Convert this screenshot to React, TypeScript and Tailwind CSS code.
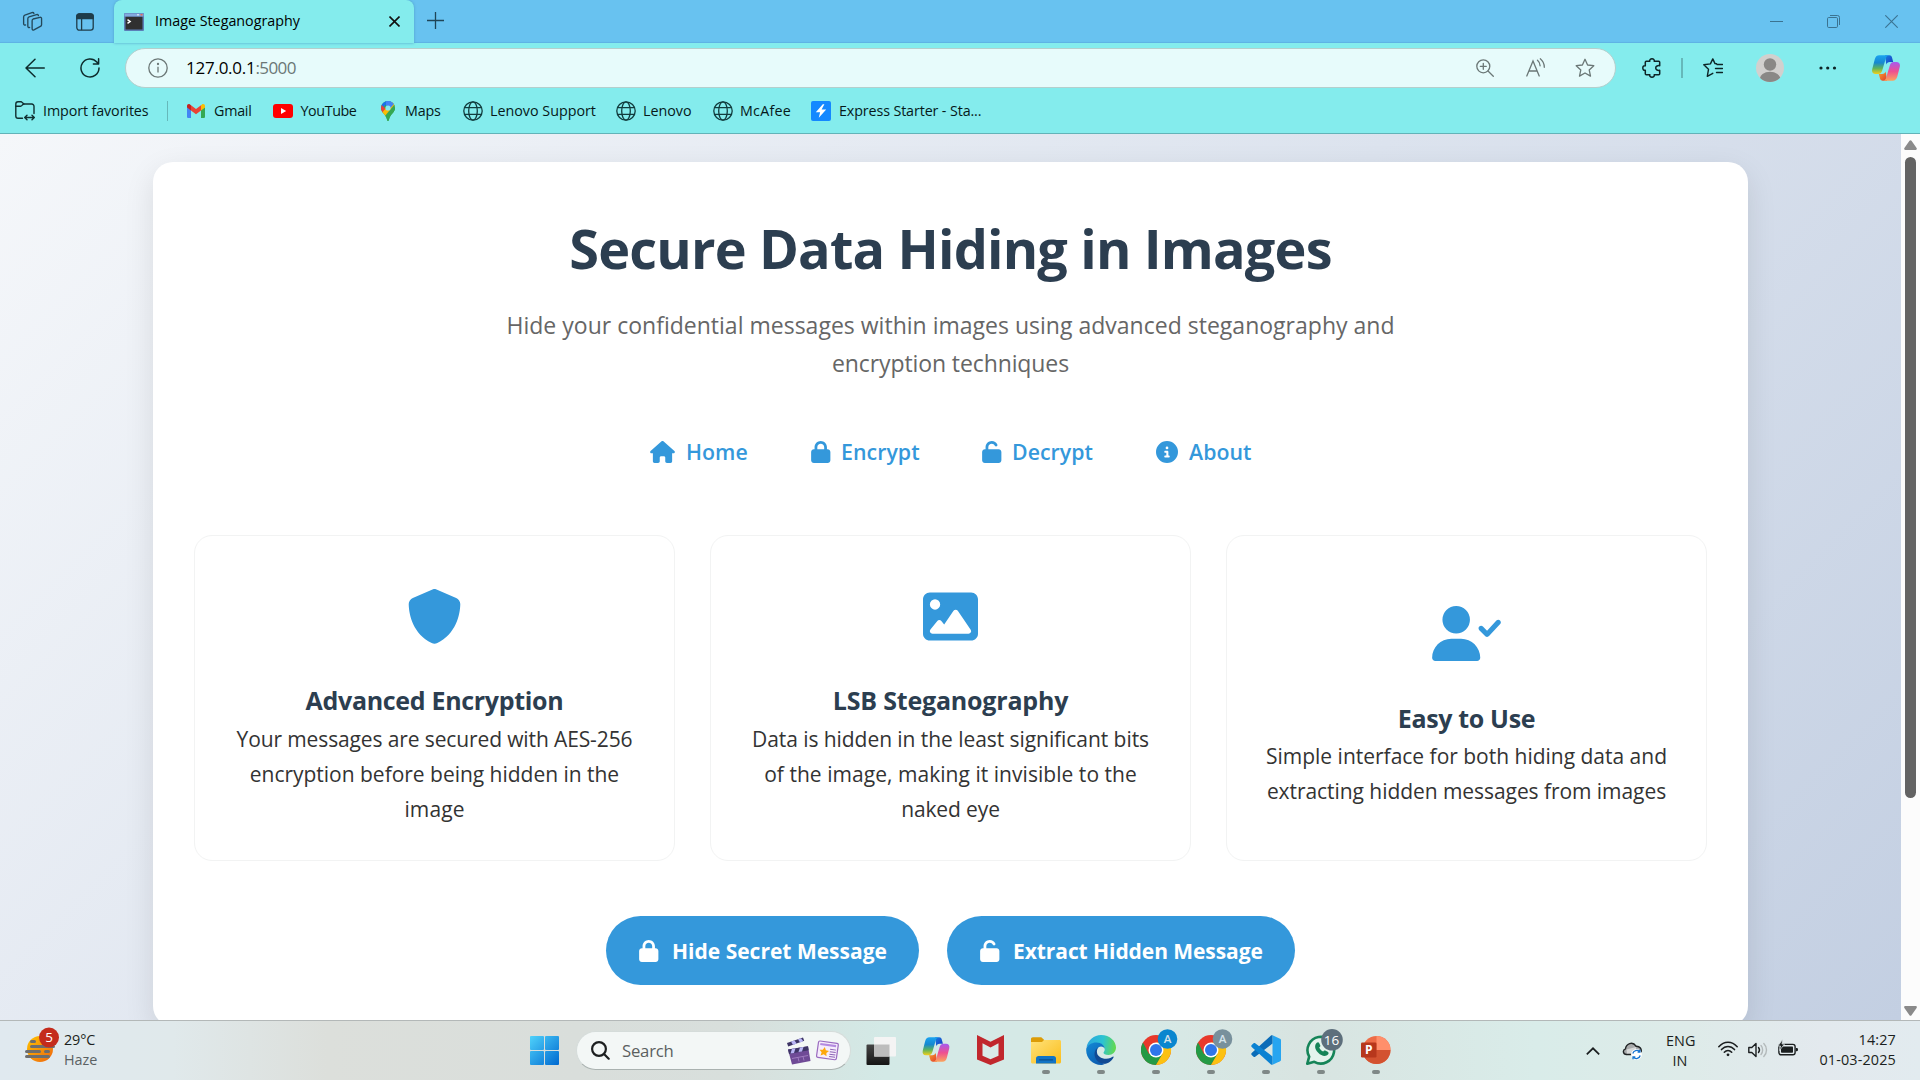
import React from "react";
import { FaCircleInfo, FaHouse, FaImage, FaLock, FaShield, FaUnlock } from "react-icons/fa6";

type P = { className?: string };

const UserCheck = ({ className }: P) => (
  <svg className={className} viewBox="0 0 640 512" fill="currentColor">
    <path d="M96 128a128 128 0 1 1 256 0A128 128 0 1 1 96 128zM0 482.300C0 383.800 79.800 304 178.300 304h91.400C368.200 304 448 383.800 448 482.300c0 16.400-13.300 29.700-29.700 29.700H29.700C13.300 512 0 498.700 0 482.300z" />
    <path d="M632.300 134.400c-9.700-9-24.900-8.450-33.900 1.270l-87.050 93.750-38.390-38.390c-9.380-9.380-24.560-9.380-33.940 0s-9.380 24.560 0 33.940l56 56C499.500 285.500 505.600 288 512 288h.44c6.530-.13 12.720-2.890 17.160-7.670l104-112c9-9.730 8.400-24.930-1.300-33.930z" />
  </svg>
);

const Workspaces = ({ className }: P) => (
  <svg className={className} viewBox="0 0 22 22" fill="none" stroke="#24485a" strokeWidth="1.4" strokeLinejoin="round" strokeLinecap="round">
    <path d="M11.6 8.4 18.8 6.6c1-.2 1.7.4 1.7 1.3v6.6c0 .8-.4 1.4-1.2 1.7l-6.8 3.6c-1 .5-1.9 0-1.9-1.1v-8.6c0-.8.3-1.5 1-1.7Z" />
    <path d="M8 17.2c-1 .4-1.900-.1-1.900-1.200V8.200c0-1 .5-1.700 1.300-2l7.800-2.400c1-.3 1.800.1 2 1" />
    <path d="M3.800 14.600c-1.100.4-2.100-.1-2.100-1.200V6.200c0-1 .5-1.700 1.300-2l7.400-2.500c1-.3 1.800 0 2.100.9" />
  </svg>
);

const TabActions = ({ className }: P) => (
  <svg className={className} viewBox="0 0 18 18" fill="none" stroke="#1f3c4a" strokeWidth="1.3">
    <rect x=".8" y=".8" width="16.400" height="16.400" rx="2.600" />
    <path d="M.8 5.500V3.400A2.600 2.600 0 0 1 3.400.8h11.200a2.600 2.600 0 0 1 2.600 2.600v2.100Z" fill="#1f3c4a" />
    <path d="M5.600 5.500v11.600" />
  </svg>
);

const Terminal = ({ className }: P) => (
  <svg className={className} viewBox="0 0 20 18">
    <rect width="20" height="18" rx="1" fill="#5b7fb8" />
    <rect x=".5" y=".5" width="19" height="3" fill="#83a9dd" />
    <rect x="13" y="1" width="2" height="1.500" fill="#cfdcf0" />
    <rect x="16.500" y="1" width="2" height="1.500" fill="#e26a5a" />
    <rect x="1.500" y="3.800" width="17" height="12.700" fill="#303030" />
    <path d="m3.500 6.600 2.600 1.900-2.600 1.900" fill="none" stroke="#fff" strokeWidth="1.500" />
  </svg>
);

const Globe = ({ className }: P) => (
  <svg className={className} viewBox="0 0 20 20" fill="none" stroke="#123c3e" strokeWidth="1.300">
    <circle cx="10" cy="10" r="9.200" />
    <ellipse cx="10" cy="10" rx="4.300" ry="9.200" />
    <path d="M1.700 6.700h16.600M1.700 13.300h16.600" />
  </svg>
);

const ImportFav = ({ className }: P) => (
  <svg className={className} viewBox="0 0 20 20" fill="none" stroke="#102f31" strokeWidth="1.400" strokeLinecap="round" strokeLinejoin="round">
    <path d="M7.500 17.300H3A2.200 2.200 0 0 1 .8 15.100V3A2.200 2.200 0 0 1 3 .8h3.300L9 3h7.800A2.200 2.200 0 0 1 19 5.200v7.300" />
    <path d="M.8 5.300h4.700C7 5.300 7.500 3 9 3" />
    <path d="M9.800 16.500h9.400M12 14.200l-2.300 2.300 2.300 2.300M17 14.200l2.300 2.300-2.300 2.300" />
  </svg>
);

const Gmail = ({ className }: P) => (
  <svg className={className} viewBox="0 0 18 14">
    <path d="M0 3v9.700C0 13.400.6 14 1.300 14H4V6Z" fill="#4285f4" />
    <path d="M18 3v9.700c0 .7-.6 1.300-1.300 1.300H14V6Z" fill="#34a853" />
    <path d="M14 1.200V6.500l4-3V1.900C18 .2 16.200-.5 15 .4Z" fill="#fbbc04" />
    <path d="M4 6.500V1.200l5 3.800 5-3.800v5.300l-5 3.800Z" fill="#ea4335" />
    <path d="M0 1.900v1.600l4 3V1.200L3 .4C1.800-.5 0 .2 0 1.900Z" fill="#c5221f" />
  </svg>
);

const YouTube = ({ className }: P) => (
  <svg className={className} viewBox="0 0 20 14">
    <rect width="20" height="14" rx="3" fill="#f00" />
    <path d="m8 4 5.200 3L8 10Z" fill="#fff" />
  </svg>
);

const MapsPin = ({ className }: P) => (
  <svg className={className} viewBox="0 0 14 20">
    <clipPath id="pin"><path d="M7 0a7 7 0 0 1 7 7c0 4-3.500 5.500-5.200 9.200C8 18 7.900 20 7 20s-1-2-1.800-3.800C3.500 12.500 0 11 0 7a7 7 0 0 1 7-7Z" /></clipPath>
    <g clipPath="url(#pin)">
      <rect width="14" height="20" fill="#34a853" />
      <path d="M0 14V9L10-2h-10Z" fill="#1a73e8" />
      <path d="M0 3.500 5 8 2 12-2 10Z" fill="#ea4335" />
      <path d="M5-1h6l3 3.500L8 8 5 5Z" fill="#4285f4" />
      <path d="M1 11.500 12 0l2 6-10 10Z" fill="#fbbc04" />
      <path d="M3.500 15.500 14 3v17H4Z" fill="#34a853" />
      <path d="M4.500-1h7l1.400 4L8.500 8Z" fill="#4285f4" />
    </g>
    <circle cx="7" cy="7" r="2.600" fill="#84eced" />
  </svg>
);

const Bolt = ({ className }: P) => (
  <svg className={className} viewBox="0 0 20 20">
    <rect width="20" height="20" rx="2" fill="#1488ff" />
    <path d="M11.800 3.300 4.800 11.300h4.300L7.800 16.800l7.400-8.300h-4.600l2.800-5.200Z" fill="#fff" />
  </svg>
);

const Copilot = ({ className }: P) => (
  <svg className={className} viewBox="0 0 28 26">
    <defs>
      <linearGradient id="cpA" x1="0" y1="0" x2="0" y2="1"><stop offset="0" stopColor="#1aa3f0" /><stop offset=".4" stopColor="#1688d0" /><stop offset=".7" stopColor="#5fb45b" /><stop offset="1" stopColor="#f5cf1b" /></linearGradient>
      <linearGradient id="cpB" x1="0" y1="0" x2="0" y2="1"><stop offset="0" stopColor="#a55bf0" /><stop offset=".5" stopColor="#ee4f91" /><stop offset="1" stopColor="#fba45c" /></linearGradient>
      <linearGradient id="cpC" x1="0" y1="0" x2="1" y2="1"><stop offset="0" stopColor="#1780e0" /><stop offset="1" stopColor="#1937c4" /></linearGradient>
      <linearGradient id="cpD" x1="0" y1="0" x2="1" y2="1"><stop offset="0" stopColor="#f7a52a" /><stop offset="1" stopColor="#e2382f" /></linearGradient>
    </defs>
    <path d="M13 .3h4.300c1.500 0 2.300.8 2.700 2.200L21.200 7h-3.400c-2 0-3 1-3.500 2.500Z" fill="url(#cpC)" />
    <path d="M15 25.700h-4.300c-1.500 0-2.300-.8-2.700-2.200L6.800 19h3.400c2 0 3-1 3.500-2.500Z" fill="url(#cpD)" />
    <path d="M7.300.3h9.200c-1.600.4-2.300 1.700-2.800 3.400l-3.400 11.600c-.7 2.300-1.800 3.700-4 3.700H3.600C.8 19-.4 17 .2 14.200L2.700 4.500C3.400 1.800 4.800.3 7.300.3Z" fill="url(#cpA)" />
    <path d="M20.700 25.700h-9.200c1.600-.4 2.300-1.700 2.800-3.400l3.400-11.600c.7-2.300 1.800-3.700 4-3.700h2.700c2.800 0 4 2 3.400 4.800l-2.500 9.700c-.7 2.700-2.100 4.200-4.600 4.200Z" fill="url(#cpB)" />
  </svg>
);

const starPath = "M10 1.300 12.600 7l6.200.7-4.600 4.200 1.300 6.200L10 15l-5.500 3.100 1.300-6.200L1.200 7.700 7.400 7Z";

const favourites = [
  { label: "Gmail", w: "w-[86px]", icon: <Gmail className="h-3.5 w-[18px]" />, text: "tracking-[-0.25px] ml-[9px]" },
  { label: "YouTube", w: "w-[106px]", icon: <YouTube className="h-3.5 w-5" />, text: "tracking-[-0.4px] ml-[7.5px]" },
  { label: "Maps", w: "w-[84px]", icon: <MapsPin className="ml-0.5 h-5 w-3.5" />, text: "tracking-[-0.2px] ml-[10px]" },
  { label: "Lenovo Support", w: "w-[153px]", icon: <Globe className="size-5" />, text: "ml-[7px]" },
  { label: "Lenovo", w: "w-[97px]", icon: <Globe className="size-5" />, text: "ml-[7px]" },
  { label: "McAfee", w: "w-[98px]", icon: <Globe className="size-5" />, text: "tracking-[0.22px] ml-[7px]" },
  { label: "Express Starter - Sta...", w: "w-[180px]", icon: <Bolt className="size-5" />, text: "tracking-[-0.12px] ml-[8px]" },
];

function TabStrip() {
  return (
    <div className="flex h-[43px] bg-[#68c2f0] shadow-[inset_0_-2px_1px_-1px_#5fb2e4]">
      <div className="flex w-[114px] items-center pl-[22px]">
        <Workspaces className="size-[21px]" />
        <TabActions className="ml-[33px] size-[18px]" />
      </div>
      <div className="flex w-[300px] items-center rounded-t-lg bg-[#84eced] pl-[10px] shadow-[0_0_3px_#4f9fc8]">
        <Terminal className="h-[18px] w-5" />
        <span className="ml-[11px] w-[234px] pb-0.5 text-[14.3px]">Image Steganography</span>
        <svg className="size-[11px]" viewBox="0 0 11 11" stroke="#111" strokeWidth="1.600"><path d="m.5.5 10 10m0-10-10 10" /></svg>
      </div>
      <svg className="mt-3 ml-[13px] size-[17px]" viewBox="0 0 17 17" stroke="#1f4557" strokeWidth="1.300"><path d="M8.500 0v17M0 8.500h17" /></svg>
      <div className="ml-auto flex h-[43px] items-center gap-[44px] pr-[22px] text-[#3b7391]">
        <svg className="size-[13px]" viewBox="0 0 13 13" stroke="currentColor"><path d="M0 6.500h13" /></svg>
        <svg className="mr-px size-[13px]" viewBox="0 0 13 13" fill="none" stroke="currentColor"><rect x=".5" y="2.500" width="10" height="10" rx="1.200" /><path d="M3 .5h7.500a2 2 0 0 1 2 2V10" /></svg>
        <svg className="size-[13px]" viewBox="0 0 13 13" stroke="currentColor" strokeWidth="1.100"><path d="m.3.300 12.400 12.400m0-12.400L.3 12.700" /></svg>
      </div>
    </div>
  );
}

function AddressBar() {
  return (
    <div className="flex h-[50px] items-center pl-[25px]">
      <svg className="size-5" viewBox="0 0 20 20" fill="none" stroke="#0d2b2c" strokeWidth="1.500" strokeLinecap="round" strokeLinejoin="round"><path d="M19.300 10H1M10 1.200 1 10l9 8.800" /></svg>
      <svg className="ml-[35px] size-5" viewBox="0 0 20 20" fill="none" stroke="#0d2b2c" strokeWidth="1.500" strokeLinecap="round" strokeLinejoin="round"><path d="M19 10a9 9 0 1 1-2.200-5.900L18.500 6M18.600.8V6h-5.200" /></svg>
      <div className="ml-[25px] flex h-10 w-[1491px] items-center rounded-full border border-[#b4cfcd] bg-[#e7fbfb] pl-[22px] pr-5 text-[#6b7776]">
        <svg className="size-5" viewBox="0 0 20 20" fill="none" stroke="currentColor" strokeWidth="1.300"><circle cx="10" cy="10" r="9.200" /><path d="M10 8.800v5.600" /><circle cx="10" cy="6" r=".5" fill="currentColor" /></svg>
        <span className="ml-[18px] text-[17px] tracking-[-0.25px] text-black">127.0.0.1</span>
        <span className="text-[17px] tracking-[-0.6px]">:5000</span>
        <svg className="ml-auto size-[18px]" viewBox="0 0 18 18" fill="none" stroke="currentColor" strokeWidth="1.300" strokeLinecap="round"><circle cx="7.300" cy="7.300" r="6.500" /><path d="m12 12 5.300 5.300M7.300 4.300v6M4.300 7.300h6" /></svg>
        <svg className="ml-8 h-5 w-[20px]" viewBox="0 0 20 20" fill="none" stroke="currentColor" strokeWidth="1.300" strokeLinecap="round"><path d="M.8 18 7 3l6.200 15M3 13h8M11.500 2.200c1.600 1.300 2.600 3.300 2.600 5.600M14.300.8c2.400 2 4 5 4 8.500" /></svg>
        <svg className="ml-[29px] size-5" viewBox="0 0 20 20" fill="none" stroke="currentColor" strokeWidth="1.300" strokeLinejoin="round"><path d={starPath} /></svg>
      </div>
      <svg className="ml-[26px] size-5" viewBox="0 0 20 20" fill="none" stroke="#0d2426" strokeWidth="1.500" strokeLinejoin="round"><path d="M4.300 3.300h3.500C7.300 1.800 8.500.8 10 .8s2.700 1 2.200 2.500h4.500c.6 0 1 .4 1 1v3.400c-1.800-.4-4 .3-4 2.300s2.200 2.700 4 2.300v3.400c0 .6-.4 1-1 1h-4.500c.5 1.500-.7 2.500-2.200 2.500s-2.700-1-2.200-2.500H4.300c-.6 0-1-.4-1-1v-3.500C1.800 12.700.8 11.500.8 10s1-2.700 2.500-2.200V4.300c0-.6.4-1 1-1Z" /></svg>
      <div className="ml-[19px] h-5 w-0.5 bg-[#66b8ba]" />
      <svg className="ml-5 size-5" viewBox="0 0 20 20" fill="none" stroke="#0d2426" strokeWidth="1.400" strokeLinecap="round" strokeLinejoin="round"><path d="M13.500 5.800 12 5.600 9.800.9 7.400 5.900.8 6.800l4.700 4.500-1.200 7L9.800 15.300M14 6.500h5.500M12.500 10.500h7M13.500 14.500h6" /></svg>
      <svg className="ml-[33px] size-7" viewBox="0 0 28 28"><clipPath id="av"><circle cx="14" cy="14" r="14" /></clipPath><g clipPath="url(#av)"><rect width="28" height="28" fill="#d2d0ce" /><circle cx="14" cy="10.500" r="6.200" fill="#8a8886" /><ellipse cx="14" cy="25.500" rx="10.500" ry="7.700" fill="#8a8886" /></g></svg>
      <svg className="ml-[35px] h-1 w-[18px]" viewBox="0 0 18 4" fill="#0d2426"><circle cx="2" cy="2" r="1.600" /><circle cx="8.700" cy="2" r="1.600" /><circle cx="15.500" cy="2" r="1.600" /></svg>
      <Copilot className="ml-[35px] h-[26px] w-7" />
    </div>
  );
}

function FavouritesBar() {
  return (
    <div className="flex h-[41px] items-center border-b border-[#62b3b8] pl-[15px] pb-[5px] text-[14.3px] text-[#06191a]">
      <div className="flex w-[152px] items-center">
        <ImportFav className="size-5" />
        <span className="ml-2 tracking-[-0.1px]">Import favorites</span>
      </div>
      <div className="mr-[19px] h-5 w-px bg-[#66b8ba]" />
      {favourites.map((f) => (
        <div key={f.label} className={`flex items-center whitespace-nowrap ${f.w}`}>
          {f.icon}
          <span className={f.text}>{f.label}</span>
        </div>
      ))}
    </div>
  );
}

const features = [
  {
    title: "Advanced Encryption",
    titleClass: "tracking-[-0.32px]",
    icon: <FaShield className="size-[55px]" />,
    lines: [
      ["Your messages are secured with AES-256", "tracking-[-0.12px]"],
      ["encryption before being hidden in the", "tracking-[-0.02px]"],
      ["image", "tracking-[0.1px]"],
    ],
  },
  {
    title: "LSB Steganography",
    titleClass: "tracking-[-0.2px]",
    icon: <FaImage className="size-[55px]" />,
    lines: [
      ["Data is hidden in the least significant bits", "tracking-[-0.06px]"],
      ["of the image, making it invisible to the", "tracking-[0.04px]"],
      ["naked eye", "tracking-[-0.12px]"],
    ],
  },
  {
    title: "Easy to Use",
    titleClass: "tracking-[-0.35px]",
    icon: <UserCheck className="-mt-px mb-px h-[55px] w-[69px]" />,
    lines: [
      ["Simple interface for both hiding data and", "tracking-[-0.01px]"],
      ["extracting hidden messages from images", "tracking-[-0.06px]"],
    ],
  },
];

function WebPage() {
  return (
    <div className="flex h-[886px]">
      <main className="h-full w-[1901px] overflow-hidden bg-[linear-gradient(135deg,#f5f7fa_0%,#c3cfe2_100%)] pt-7">
        <div className="mx-auto flex h-[864px] w-[1595px] flex-col items-center rounded-[20px] bg-white px-[41px] pt-[54px] shadow-[0_10px_30px_rgba(0,0,0,0.1)]">
          <h1 className="text-[54px] leading-[64px] font-bold tracking-[-0.82px] text-[#2c3e50]">Secure Data Hiding in Images</h1>
          <p className="mt-[26px] text-center text-[23px] leading-[38px] text-[#666]">
            <span className="block tracking-[0.01px]">Hide your confidential messages within images using advanced steganography and</span>
            <span className="block tracking-[-0.1px]">encryption techniques</span>
          </p>
          <nav className="mt-[52px] flex h-9 w-[601px] text-[21.3px] leading-9 font-semibold tracking-[0.05px] text-[#3498db]">
            <a className="flex w-[161px] shrink-0 items-center gap-[11px]"><FaHouse className="h-[22px] w-[25px]" />Home</a>
            <a className="flex w-[171px] shrink-0 items-center gap-[10.5px]"><FaLock className="h-[22px] w-[19.5px]" />Encrypt</a>
            <a className="flex w-[174px] shrink-0 items-center gap-[10.5px]"><FaUnlock className="h-[22px] w-[19.5px]" />Decrypt</a>
            <a className="flex items-center gap-[11px]"><FaCircleInfo className="size-[22px]" />About</a>
          </nav>
          <section className="mt-[65px] grid w-full grid-cols-3 gap-[35px]">
            {features.map((f) => (
              <article key={f.title} className="flex h-[326px] flex-col items-center justify-center rounded-[18px] border border-[#f2f3f3] bg-white text-center">
                <div className="mb-[35px] pt-5 text-[#3498db]">{f.icon}</div>
                <h3 className={`text-[25px] leading-[42px] font-bold text-[#2c3e50] ${f.titleClass}`}>{f.title}</h3>
                <p className="mt-[0.6px] text-[21px] leading-[35px] text-[#333]">
                  {f.lines.map(([t, c]) => (
                    <span key={t} className={`block whitespace-nowrap ${c}`}>{t}</span>
                  ))}
                </p>
              </article>
            ))}
          </section>
          <div className="mt-[55px] flex gap-7 text-[21px] leading-[69px] font-bold text-white">
            <button className="flex h-[69px] w-[313px] items-center rounded-full bg-[#3498db] pl-[33px]"><FaLock className="mr-[13.5px] h-[22px] w-[19.5px]" /><span className="pt-px">Hide Secret Message</span></button>
            <button className="flex h-[69px] w-[348px] items-center rounded-full bg-[#3498db] pl-[33px] tracking-[-0.07px]"><FaUnlock className="mr-[13.5px] h-[22px] w-[19.5px]" /><span className="pt-px">Extract Hidden Message</span></button>
          </div>
        </div>
      </main>
      <div className="flex w-[19px] flex-col items-center bg-[#fcfcfc] pt-1.5 pb-1">
        <svg className="h-2.5 w-[13px]" viewBox="0 0 13 10" fill="#8a8a8a"><path d="M5.500.8 .4 8c-.5.900-.2 2 .9 2h10.400c1.100 0 1.400-1.100.9-2L7.500.8c-.5-.8-1.500-.8-2 0Z" /></svg>
        <div className="mt-[7px] h-[641px] w-[11px] rounded-full bg-[#636363]" />
        <svg className="mt-auto h-2.5 w-[13px] rotate-180" viewBox="0 0 13 10" fill="#8a8a8a"><path d="M5.500.8 .4 8c-.5.900-.2 2 .9 2h10.400c1.100 0 1.400-1.100.9-2L7.500.8c-.5-.8-1.500-.8-2 0Z" /></svg>
      </div>
    </div>
  );
}

const Weather = () => (
  <svg className="h-[36px] w-[34px]" viewBox="0 0 34 36">
    <defs><linearGradient id="sun" x1="0" y1="0" x2="1" y2="1"><stop offset="0" stopColor="#ffc400" /><stop offset="1" stopColor="#ee6410" /></linearGradient></defs>
    <circle cx="15" cy="22" r="13" fill="url(#sun)" />
    <g stroke="#6e6e6e" strokeWidth="3" strokeLinecap="round"><path d="M6.500 14.500h3M6.500 19.500h22M1.500 24.500h13M20.500 24.500h3M1.500 29.500h22" /></g>
    <circle cx="24" cy="10.500" r="10" fill="#c42b1c" />
    <text x="24" y="15.300" textAnchor="middle" fontSize="13.500" fill="#fff" fontFamily="Open Sans, sans-serif">5</text>
  </svg>
);

const WinLogo = () => (
  <svg className="size-[29px]" viewBox="0 0 29 29">
    <defs><linearGradient id="wn" gradientUnits="userSpaceOnUse" x1="0" y1="0" x2="29" y2="29"><stop offset="0" stopColor="#4fd2fb" /><stop offset="1" stopColor="#0069d0" /></linearGradient></defs>
    <g fill="url(#wn)"><rect width="14" height="14" rx="1" /><rect x="15" width="14" height="14" rx="1" /><rect y="15" width="14" height="14" rx="1" /><rect x="15" y="15" width="14" height="14" rx="1" /></g>
  </svg>
);

const Clapper = () => (
  <svg className="h-[28px] w-[25px]" viewBox="0 0 25 28">
    <path d="m1 6 16-5.500 1.200 3.300L2.200 9.500Z" fill="#3e3566" />
    <path d="m5 4.600 3.500-1.200 2.200 3.200L7 7.900ZM12 2.200 15 1.200l2.300 3-3.300 1.200Z" fill="#b9b5f5" />
    <path d="m2 12.500 20-3.300L24.500 24 6 27.500Z" fill="#6f4a96" />
    <path d="m2 12.500 20-3.300.7 4L3 17Z" fill="#3e3566" />
    <path d="m6 11.800 3.500-.6-1.500 4.700-3.500.7ZM14 10.500l3.500-.6-1.500 4.600-3.500.6Z" fill="#b9b5f5" />
    <path d="m6 21.500 16-3M12 20.500l1 4M17 19.500l1 4" stroke="#a985c8" strokeWidth=".8" fill="none" />
  </svg>
);

const News = () => (
  <svg className="h-[21px] w-[24px]" viewBox="0 0 24 21">
    <g transform="rotate(8 12 10)">
      <rect x="1.500" y="2.200" width="20" height="16.500" rx="1.500" fill="#f6edfc" stroke="#9a6bc0" strokeWidth="1.200" />
      <rect x="3.500" y="4" width="16" height="2.200" fill="#b48be0" />
      <path d="M14 9h6M14 11.500h6M14 14h6M14 16.300h6" stroke="#8c63b4" />
      <path d="m8.400 7.500 1.500 3 3.300.4-2.400 2.300.6 3.300-3-1.600-3 1.600.6-3.300-2.400-2.300 3.300-.4Z" fill="#fda80c" />
    </g>
  </svg>
);

const TaskView = () => (
  <svg className="size-[30px]" viewBox="0 0 30 30">
    <defs><linearGradient id="tv" x1="0" y1="0" x2="0" y2="1"><stop offset="0" stopColor="#454545" /><stop offset="1" stopColor="#151515" /></linearGradient></defs>
    <rect x=".5" y="8.500" width="23" height="20.500" rx="1" fill="url(#tv)" />
    <rect x="8" y="1" width="22" height="19.500" rx="1" fill="#f4f4f4" />
    <rect x="8" y="8.500" width="15.500" height="12" fill="#bdbdbd" />
  </svg>
);

const McAfee = () => (
  <svg className="h-[30px] w-[27px]" viewBox="0 0 27 30">
    <path d="M0 0 13.500 6.800 27 0v24.500L13.500 30 0 24.500Z" fill="#c1272d" />
    <path d="M5.500 8.300 13.500 12.500l8-4.200v12.400l-8 3.600-8-3.600Z" fill="#d9ebe8" />
  </svg>
);

const Explorer = () => (
  <svg className="h-[27px] w-[30px]" viewBox="0 0 30 27">
    <defs><linearGradient id="fo" x1="0" y1="0" x2="1" y2="1"><stop offset="0" stopColor="#ffe27a" /><stop offset="1" stopColor="#fbbd1b" /></linearGradient></defs>
    <path d="M0 2C0 1 .8.3 1.800.3h8.500L13 2.800v3H0Z" fill="#dc9c08" />
    <path d="M0 5h11l2-2h15.500c.8 0 1.500.7 1.500 1.500V25c0 .8-.7 1.500-1.500 1.500h-27C.7 26.500 0 25.800 0 25Z" fill="url(#fo)" />
    <path d="M5 26.500V21.500C5 20 6 19 7.500 19h15c1.500 0 2.500 1 2.500 2.500v5Z" fill="#1274c5" />
    <path d="M8.500 22.800h13" stroke="#0c4f8e" strokeWidth="1.300" strokeLinecap="round" />
  </svg>
);

const Edge = () => (
  <svg className="size-[30px]" viewBox="0 0 30 30">
    <defs>
      <linearGradient id="eg1" x1="0" y1=".3" x2="1" y2=".4"><stop offset="0" stopColor="#2ba6de" /><stop offset=".55" stopColor="#2cc3d2" /><stop offset="1" stopColor="#64d94f" /></linearGradient>
      <linearGradient id="eg2" x1="0" y1="0" x2=".6" y2="1"><stop offset="0" stopColor="#128ad6" /><stop offset="1" stopColor="#0c5cb0" /></linearGradient>
    </defs>
    <path d="M.5 12C2 5 8 0 15 0c9 0 15 6.300 15 12.500 0 4.500-3.500 7.500-7.500 7.500-3.500 0-5-1.300-5-2.200 0-.8 1.200-1.300 1.200-3.600C18.700 11 15.500 8 11 8 6.500 8 2.500 10 .5 12Z" fill="url(#eg1)" />
    <path d="M.3 13.500C1.300 10 5.500 7.500 10.500 7.500c5 0 8 3 8.200 6.200-.8-1.500-2.300-2.200-3.700-2.200-2.500 0-5.500 3-5.500 7.200 0 6 5 9.800 10 9.800C17.500 29.600 16 30 15 30 6.500 30-.8 22.500.3 13.500Z" fill="url(#eg2)" />
    <path d="M12.600 12.300c-1.200 1-1.700 2.700-1.700 4.400 0 4.300 4.300 7 9.300 7 3.300 0 5.500-1.500 6.500-2 .7-.3 1.100.2.8.8C25.700 26 22 28.800 18.500 28.800c-5.500 0-10-4.300-10-9.800 0-3.200 1.800-5.700 4.100-6.700Z" fill="#114a94" />
  </svg>
);

const Chrome = ({ badge }: { badge: string }) => (
  <svg className="-mr-[7px] h-[36px] w-[37px] shrink-0" viewBox="0 0 37 36">
    <g transform="translate(0 6)">
      <circle cx="15" cy="15" r="15" fill="#e8392b" />
      <path d="M2 7.500A15 15 0 0 0 15 30L22 19l-14 0Z" fill="#249a45" />
      <path d="M28 7.500A15 15 0 0 1 15 30l6.500-11.300L15 7.500Z" fill="#fcc112" />
      <circle cx="15" cy="15" r="7.500" fill="#fff" />
      <circle cx="15" cy="15" r="6" fill="#2f76ea" />
    </g>
    <circle cx="26.500" cy="10" r="9.800" fill={badge} />
    <text x="26.500" y="14.300" textAnchor="middle" fontSize="11.500" fontWeight="600" fill="#d3e2ea" fontFamily="Open Sans, sans-serif">A</text>
  </svg>
);

const VSCode = () => (
  <svg className="size-[30px]" viewBox="0 0 30 30">
    <path d="M21.500.3 29 3.800c.6.3 1 .8 1 1.500v19.400c0 .7-.4 1.200-1 1.500l-7.500 3.500Z" fill="#27a5f0" />
    <path d="M21.500.3v8.200L4.200 21.700c-.5.4-1.200.4-1.600 0L.7 20c-.6-.5-.6-1.400 0-1.900L20 .6c.4-.4 1-.5 1.500-.3Z" fill="#0a6cb8" />
    <path d="M21.500 29.700v-8.200L4.200 8.300c-.5-.4-1.200-.4-1.600 0L.7 10c-.6.5-.6 1.400 0 1.900L20 29.400c.4.400 1 .5 1.500.3Z" fill="#0b82d2" />
  </svg>
);

const WhatsApp = () => (
  <svg className="-mr-2 h-[36px] w-[38px] shrink-0" viewBox="0 0 38 36">
    <path d="M1.300 34.700 3.200 27.700A13.300 13.300 0 1 1 8.300 32.800Z" fill="#e3f3ec" stroke="#158458" strokeWidth="2.600" strokeLinejoin="round" />
    <path d="M10.500 14c-3 3.500-.5 7.500 2 10s7 4.500 9.700 1.300c.8-1 .3-2-.5-2.500l-2.500-1.300c-1-.4-1.500.3-2 1-1.500-.5-3.300-2.200-4-4 .8-.6 1.500-1 1-2.200L13 13.800c-.5-1-1.800-.7-2.500.2Z" fill="#158458" />
    <circle cx="26" cy="10.800" r="10.800" fill="#5d6f7c" />
    <text x="25.500" y="15.500" textAnchor="middle" fontSize="13.500" fill="#fff" fontFamily="Open Sans, sans-serif">16</text>
  </svg>
);

const PowerPoint = () => (
  <svg className="h-[28px] w-[30px]" viewBox="0 0 30 28">
    <circle cx="15.500" cy="14" r="14" fill="#ed6c47" />
    <path d="M15.500 0a14 14 0 0 1 14 14h-14Z" fill="#ff8f6b" />
    <path d="M1.500 14a14 14 0 0 0 28 0Z" fill="#d35230" />
    <rect x="0" y="6.500" width="15.500" height="15" rx="1.300" fill="#b7371c" />
    <text x="7.700" y="18.200" textAnchor="middle" fontSize="12" fontWeight="700" fill="#fff" fontFamily="Open Sans, sans-serif">P</text>
  </svg>
);

const apps: { name: string; icon: React.ReactNode; pad: string; open: boolean }[] = [
  { name: "taskview", icon: <TaskView />, pad: "justify-center pt-[15px]", open: false },
  { name: "copilot", icon: <Copilot className="h-[25px] w-7" />, pad: "justify-center pt-4", open: false },
  { name: "mcafee", icon: <McAfee />, pad: "justify-center pt-3.5", open: false },
  { name: "explorer", icon: <Explorer />, pad: "justify-center pt-4", open: true },
  { name: "edge", icon: <Edge />, pad: "justify-center pt-3.5", open: true },
  { name: "chrome", icon: <Chrome badge="#0a86cf" />, pad: "justify-start pt-2", open: true },
  { name: "chrome-alt", icon: <Chrome badge="#78909c" />, pad: "justify-start pt-2", open: true },
  { name: "vscode", icon: <VSCode />, pad: "justify-center pt-3.5", open: true },
  { name: "whatsapp", icon: <WhatsApp />, pad: "justify-start pt-2", open: true },
  { name: "powerpoint", icon: <PowerPoint />, pad: "justify-center pt-[15px]", open: true },
];

function Taskbar() {
  return (
    <footer className="flex h-[60px] border-t border-[#b3b8b8] bg-[linear-gradient(90deg,#e0e9ef_0%,#e0e9eb_9%,#dcdfdb_17%,#d9dedb_30%,#d8dfdc_38%,#d3e9e6_46%,#d7e9e6_60%,#d8e4e1_68%,#d9ece9_80%,#deebe9_88%,#e3e9ee_95%,#e2ebef_100%)] text-[14.4px] leading-5 text-[#1b1f20]">
      <div className="flex w-[530px] pl-[25px] pt-1.5">
        <Weather />
        <div className="ml-[5px] pt-[3px]">
          <div className="tracking-[-0.15px]">29°C</div>
          <div className="text-[#5b6163]">Haze</div>
        </div>
      </div>
      <div className="mt-[15px]"><WinLogo /></div>
      <div className="ml-[17px] mt-2.5 flex h-[39px] w-[275px] items-center rounded-full border border-[#d5dcda] border-b-[#aab2b0] bg-[#f3f7f6] pl-[14px] pr-[10px]">
        <svg className="size-[19px]" viewBox="0 0 19 19" fill="none" stroke="#1d1f20" strokeWidth="2.200" strokeLinecap="round"><circle cx="8" cy="8" r="6.900" /><path d="m13 13 4.700 4.700" /></svg>
        <span className="ml-3 text-[16.700px] tracking-[-0.2px] text-[#5b5f60]">Search</span>
        <div className="ml-auto flex items-center gap-[5px]"><Clapper /><News /></div>
      </div>
      <div className="ml-[2px] flex">
        {apps.map((a) => (
          <div key={a.name} className="flex w-[55px] flex-col items-center">
            <div className={`flex h-[49px] w-[30px] ${a.pad}`}>{a.icon}</div>
            {a.open && <div className="h-1 w-2 rounded-full bg-[#7f8887]" />}
          </div>
        ))}
      </div>
      <div className="ml-auto flex h-[59px] items-center pr-6">
        <svg className="h-2 w-3.5" viewBox="0 0 14 8" fill="none" stroke="#1b1f20" strokeWidth="1.700"><path d="m.8 7.300 6.200-6 6.200 6" /></svg>
        <svg className="ml-[22px] h-[19px] w-5" viewBox="0 0 20 19">
          <path d="M4.500 13.500C1 13.500.2 9 3.500 7.800 4 3 10.500-.3 14 5.200c4-.2 6 3 5 5.800l-4 2.500Z" fill="#a9abac" stroke="#202425" strokeWidth="1.400" />
          <path d="M4.500 8.500 14 6v6l-9 .5Z" fill="#d8dada" />
          <circle cx="14.500" cy="13.500" r="5.400" fill="#fff" />
          <path d="M10.800 12.500a4 4 0 0 1 6.800-1.800M18.200 14.500a4 4 0 0 1-6.800 1.800M17.900 8.800v2.300h-2.300M11 18.200v-2.300h2.300" fill="none" stroke="#1674d1" strokeWidth="1.300" />
        </svg>
        <div className="ml-6 w-7 whitespace-nowrap text-center tracking-[0.1px]">ENG<br />IN</div>
        <svg className="ml-6 mb-[3px] h-4 w-5" viewBox="0 0 20 16" fill="none" stroke="#1b1f20" strokeWidth="1.500" strokeLinecap="round"><path d="M.8 5.800C6-.4 14-.4 19.200 5.800M3.500 8.600c3.700-4.300 9.300-4.300 13 0M6.300 11.300c2.200-2.500 5.200-2.500 7.400 0" /><circle cx="10" cy="13.800" r="1.400" fill="#1b1f20" stroke="none" /></svg>
        <svg className="mb-px ml-2.5 h-4 w-5" viewBox="0 0 20 16" fill="none" stroke="#1b1f20" strokeWidth="1.400" strokeLinecap="round" strokeLinejoin="round"><path d="M.8 5.500h3L8 1.500v13l-4.200-4h-3ZM10.500 5.500c1.200 1.500 1.200 3.500 0 5" /><path d="M13 3.500c2.200 2.500 2.200 6.500 0 9M15.800 1.500c3.600 3.600 3.600 9.400 0 13" stroke="#b3b9ba" /></svg>
        <svg className="mb-[6px] ml-2.5 h-[17px] w-5" viewBox="0 -1 20 17"><rect x=".9" y="4.400" width="16.200" height="10.400" rx="2.200" fill="none" stroke="#1b1f20" strokeWidth="1.400" /><rect x="3" y="6.500" width="12" height="6.200" rx=".8" fill="#1b1f20" /><path d="M18 8h.8c.8 0 1.200.6 1.200 1.600s-.4 1.600-1.200 1.600H18Z" fill="#1b1f20" /><path d="M4.500-.5 0 6h2.500l-1 4.500 5-6.500H4Z" fill="#1b1f20" stroke="#e1e9ec" strokeWidth=".7" /></svg>
        <div className="mb-px w-[98px] text-right tracking-[0.15px]">14:27<br />01-03-2025</div>
      </div>
    </footer>
  );
}

export default function App() {
  return (
    <div className="h-[1080px] w-[1920px] overflow-hidden bg-white font-['Open_Sans',sans-serif]">
      <header className="h-[134px] bg-[#84eced]">
        <TabStrip />
        <AddressBar />
        <FavouritesBar />
      </header>
      <WebPage />
      <Taskbar />
    </div>
  );
}
